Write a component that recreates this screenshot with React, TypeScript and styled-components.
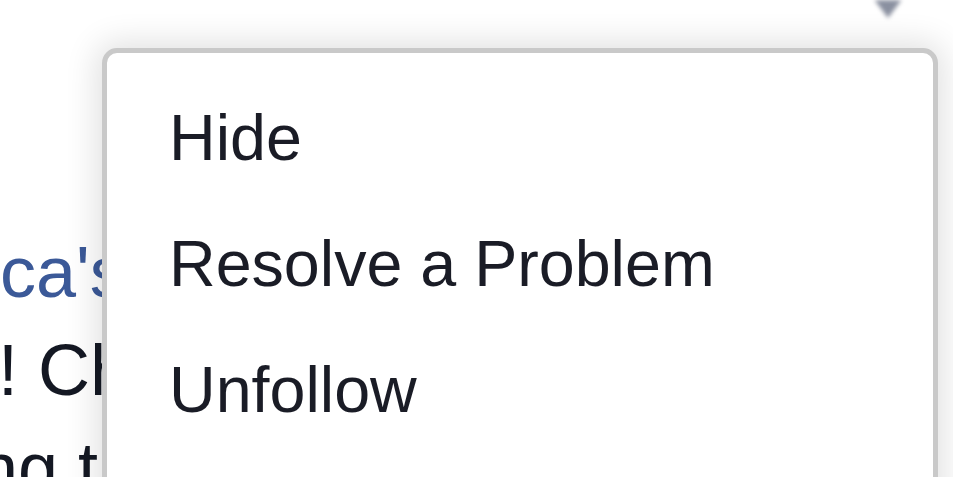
import styled, { createGlobalStyle } from "styled-components";

const GlobalStyle = createGlobalStyle`
  html, body {
    margin: 0;
    padding: 0;
    background: #ffffff;
  }
`;

const Page = styled.div`
  position: relative;
  width: 953px;
  height: 477px;
  overflow: hidden;
  background: #ffffff;
  font-family: "Liberation Sans", Arial, sans-serif;
`;

// post text that sits behind the menu, only its left edge shows
const Story = styled.div`
  display: flex;
  flex-direction: column;
  width: 110px;
  overflow: hidden;
  padding-top: 223px;
  font-size: 72px;
  line-height: 98px;
  color: #141823;
  white-space: nowrap;
`;

const StoryLine = styled.div<{ $shift: number }>`
  margin-left: ${({ $shift }) => $shift}px;
`;

const NameLink = styled.span`
  color: #3b5998;
`;

const Caret = styled.svg`
  position: absolute;
  top: 0;
  left: 867px;
  filter: blur(2px);
`;

const Menu = styled.ul`
  position: absolute;
  top: 48px;
  left: 102px;
  width: 836px;
  height: 520px;
  box-sizing: border-box;
  margin: 0;
  padding: 22px 0 0;
  list-style: none;
  background: #ffffff;
  border: 5px solid #c9c9c9;
  border-radius: 15px;
  box-shadow: 0 0 32px 6px rgba(0, 0, 0, 0.12);
`;

const MenuItem = styled.li`
  padding-left: 62px;
  font-size: 64.6px;
  line-height: 126px;
  color: #1a1c26;
  cursor: pointer;
`;

export default function App() {
  return (
    <>
      <GlobalStyle />
      <Page>
        <Story>
          <StoryLine $shift={-164}>
            <NameLink>Jessica's</NameLink> new photo
          </StoryLine>
          <StoryLine $shift={-2}>! Check it out</StoryLine>
          <StoryLine $shift={-38}>ing the day</StoryLine>
        </Story>

        <Caret width="42" height="24" viewBox="0 0 42 24">
          <polygon points="0,-10 42,-10 21,18" fill="#8a90a0" />
        </Caret>

        <Menu>
          <MenuItem>Hide</MenuItem>
          <MenuItem>Resolve a Problem</MenuItem>
          <MenuItem>Unfollow</MenuItem>
        </Menu>
      </Page>
    </>
  );
}
